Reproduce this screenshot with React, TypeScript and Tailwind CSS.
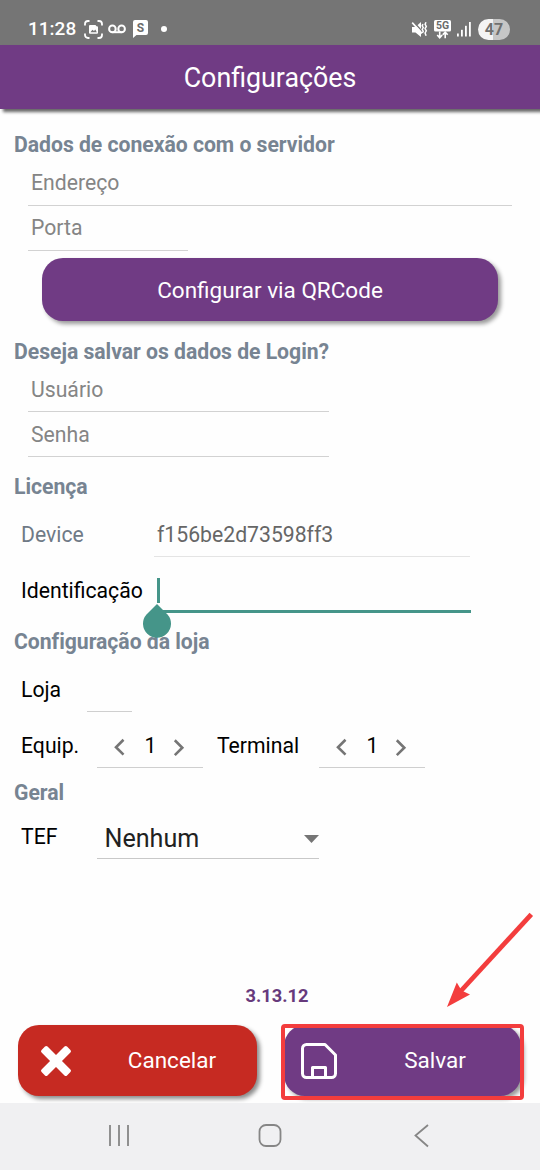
import type { ReactNode } from "react";

function SectionTitle({ children, className = "" }: { children: ReactNode; className?: string }) {
    return (
        <h2 className={`pl-3.5 h-8 leading-8 text-[21.2px] font-bold text-[#778492] whitespace-nowrap tracking-[-0.03px] ${className}`}>
            {children}
        </h2>
    );
}

function Field({ label, className }: { label: string; className: string }) {
    return (
        <div className={`ml-7 h-[45px] pl-[3px] border-b border-[#d2d2d2] text-[21.2px] text-[#858585] ${className}`}>
            {label}
        </div>
    );
}

function Stepper({ value }: { value: number }) {
    return (
        <div className="w-[106px] h-11 border-b border-[#cfcfcf] flex items-center">
            <svg className="ml-[15px] mt-0.5 w-3.5 h-5" viewBox="0 0 14 20" fill="none" stroke="#757575" strokeWidth="2.6">
                <path d="M11.5 2.8 4 10.2l7.5 7.4" />
            </svg>
            <span className="w-[46px] pl-[3px] text-center">{value}</span>
            <svg className="mt-0.5 w-3.5 h-5" viewBox="0 0 14 20" fill="none" stroke="#757575" strokeWidth="2.6">
                <path d="m2.8 3.3 7.5 7.4-7.5 7.4" />
            </svg>
        </div>
    );
}

function StatusBar() {
    return (
        <div className="h-[45px] shrink-0 bg-[#757575] text-white flex items-center pt-[13px] pl-7 pr-[30px]">
            <span className="w-12 text-[19px] font-medium leading-8 whitespace-nowrap">11:28</span>
            {/* Capture */}
            <svg className="ml-2 w-[19px] h-[19px]" viewBox="0 0 19 19" fill="none" stroke="white" strokeWidth="1.8">
                <path d="M1 5.5V4a3 3 0 0 1 3-3h1.5M13.5 1H15a3 3 0 0 1 3 3v1.5M18 13.5V15a3 3 0 0 1-3 3h-1.5M5.5 18H4a3 3 0 0 1-3-3v-1.5" />
                <path d="M6 5h5.5l1 1.2H13a1 1 0 0 1 1 1v5.6a1 1 0 0 1-1 1H6a1 1 0 0 1-1-1V6a1 1 0 0 1 1-1Z" fill="white" stroke="none" />
                <path d="m6.4 12.2 2-2.4 1.6 1.2 1.3-1.6 1.5 2.8Z" fill="#757575" stroke="none" />
            </svg>
            {/* Voicemail */}
            <svg className="ml-[5px] w-[18px] h-2.5" viewBox="0 0 18 10" fill="none" stroke="white" strokeWidth="2">
                <circle cx="4.4" cy="4.9" r="3.3" />
                <circle cx="13.6" cy="4.9" r="3.3" />
                <path d="M4.4 8.2h9.2" />
            </svg>
            {/* Message */}
            <span className="ml-[7px] w-[15px] h-[18px] relative">
                <svg className="w-[15px] h-[18px]" viewBox="0 0 15 18">
                    <path d="M2 0h11a2 2 0 0 1 2 2v11a2 2 0 0 1-2 2H3.5L0 18V2a2 2 0 0 1 2-2Z" fill="white" />
                </svg>
                <span className="absolute inset-x-0 top-0 h-[15px] leading-[16px] text-center text-[12px] font-bold text-[#6b6b6b]">S</span>
            </span>
            <span className="ml-[13px] w-1.5 h-1.5 rounded-full bg-white" />
            <div className="flex-1" />
            {/* Muted with vibration */}
            <svg className="w-[17px] h-[17px]" viewBox="0 0 17 17" fill="none" stroke="white">
                <path d="M1 6h3.5L10 1v15l-5.5-4.5H1Z" fill="white" stroke="none" />
                <path d="M2.2.6 11.8 11" stroke="#757575" strokeWidth="1.5" />
                <path d="M1.2 1.6 11 12.4" strokeWidth="1.6" />
                <path d="m12 3.2-.8 1.6 1 1.8-1 1.8 1 1.8-.8 1.8M15 1.2l-.9 2 1.2 2.2-1.2 2.2 1.2 2.2-1.2 2.2 1 2.8" strokeWidth="1.5" />
            </svg>
            {/* 5G */}
            <span className="ml-[6px] w-[17px] h-[19px] relative">
                <svg className="w-[17px] h-[19px]" viewBox="0 0 17 19">
                    <rect width="17" height="11.5" rx="1.5" fill="white" />
                    <path d="M5.7 11.5v6M3.2 15l2.5 2.7L8.2 15M11.2 18.3v-6M8.7 14.8l2.5-2.7 2.5 2.7" fill="none" stroke="white" strokeWidth="1.6" />
                </svg>
                <span className="absolute inset-x-0 top-0 h-[11px] leading-[12px] text-center text-[10.5px] font-bold text-[#6b6b6b]">5G</span>
            </span>
            {/* Signal */}
            <svg className="ml-[6px] w-3.5 h-4" viewBox="0 0 14 16" fill="white">
                <rect x="0" y="12.5" width="1.8" height="3" />
                <rect x="4" y="8.8" width="1.8" height="6.7" />
                <rect x="8" y="4.8" width="1.8" height="10.7" />
                <rect x="12" y="1" width="1.8" height="14.5" />
            </svg>
            {/* Battery */}
            <span className="ml-[7px] w-8 h-[21px] rounded-full bg-[linear-gradient(to_right,#f4f4f4_47%,#c6c6c6_47%)] text-center leading-[22px] text-[16px] font-bold text-[#707070]">
                47
            </span>
        </div>
    );
}

export default function App() {
    return (
        <div className="relative w-[540px] h-[1170px] overflow-hidden flex flex-col bg-[#fefefe] text-black font-[Roboto,sans-serif]">
            <StatusBar />

            <header className="h-16 shrink-0 bg-[#703b84] text-white text-center text-[26.8px] leading-[66px] shadow-[3px_3px_3px_rgba(0,0,0,0.6)]">
                Configurações
            </header>

            <main className="flex-1 pt-5">
                {/* Server */}
                <SectionTitle>Dados de conexão com o servidor</SectionTitle>
                <Field label="Endereço" className="w-[484px] leading-[43px]" />
                <Field label="Porta" className="w-40 leading-[43px]" />
                <button className="block mt-[7px] ml-[42px] w-[456px] h-[63px] pt-0.5 rounded-[21px] bg-[#703b84] text-white text-[22.5px] shadow-[3px_3px_4px_rgba(0,0,0,0.4)]">
                    Configurar via QRCode
                </button>

                {/* Login */}
                <SectionTitle className="mt-[15px] -mb-px">Deseja salvar os dados de Login?</SectionTitle>
                <Field label="Usuário" className="w-[301px] leading-[45px]" />
                <Field label="Senha" className="w-[301px] leading-[45px]" />

                {/* License */}
                <SectionTitle className="mt-[14px]">Licença</SectionTitle>
                <div className="mt-2.5 pl-[21px] h-11 flex text-[21.2px] leading-[44px]">
                    <span className="w-[133px] text-[#6f7a86]">Device</span>
                    <span className="w-[316px] pl-[3px] border-b border-[#e4e4e4] text-[#666]">f156be2d73598ff3</span>
                </div>
                <div className="mt-3 pl-[21px] h-11 flex text-[21.2px] leading-[44px]">
                    <span className="w-[133px]">Identificação</span>
                    <div className="relative w-[317px] border-b-[3px] border-[#459589]">
                        <span className="absolute left-[3px] top-[9px] w-[3px] h-[25px] bg-[#459589]" />
                        <svg className="absolute -left-[11px] top-[35px] w-7 h-[34px]" viewBox="0 0 28 34" fill="#459589">
                            <path d="M14 0 24.5 10.5a14 14 0 1 1-21 0Z" />
                        </svg>
                    </div>
                </div>

                {/* Store */}
                <SectionTitle className="mt-[13px]">Configuração da loja</SectionTitle>
                <div className="mt-2.5 pl-[21px] h-11 flex text-[21.2px] leading-[44px]">
                    <span className="w-[66px]">Loja</span>
                    <span className="w-[45px] border-b border-[#cfcfcf]" />
                </div>
                <div className="mt-3 pl-[21px] h-11 flex text-[21.2px] leading-[44px]">
                    <span className="w-[76px]">Equip.</span>
                    <Stepper value={1} />
                    <span className="w-[116px] pl-3.5">Terminal</span>
                    <Stepper value={1} />
                </div>

                {/* General */}
                <SectionTitle className="mt-[9px]">Geral</SectionTitle>
                <div className="mt-[5px] pl-[21px] h-[45px] flex text-[21.2px] leading-[46px]">
                    <span className="w-[76px]">TEF</span>
                    <div className="w-[222px] pl-[7.5px] border-b border-[#c8c8c8] flex items-start justify-between text-[25.1px] leading-[49px] text-[#212121]">
                        Nenhum
                        <svg className="mt-[21px] w-[15px] h-2" viewBox="0 0 15 8" fill="#757575">
                            <path d="M0 0h15L7.5 8Z" />
                        </svg>
                    </div>
                </div>

                <p className="mt-[125px] pl-[14px] text-center text-[18.3px] leading-6 font-bold text-[#673a7c]">3.13.12</p>

                {/* Actions */}
                <div className="mt-[17px] pl-[18px] flex gap-[27px]">
                    <button className="w-[239px] h-[71px] flex items-center rounded-[21px] bg-[#c62a22] text-white text-[22.5px] shadow-[3px_3px_4px_rgba(0,0,0,0.45)]">
                        <svg className="ml-[22px] w-8 h-8" viewBox="0 0 32 32" fill="white">
                            <g transform="rotate(45 16 16)">
                                <rect x="-2" y="11.8" width="36" height="8.4" rx="1.8" />
                                <rect x="11.8" y="-2" width="8.4" height="36" rx="1.8" />
                            </g>
                        </svg>
                        <span className="flex-1 pt-px pl-[15px]">Cancelar</span>
                    </button>
                    <button className="w-[237px] h-[71px] flex items-center rounded-[21px] bg-[#703b84] text-white text-[22.5px] shadow-[3px_3px_4px_rgba(0,0,0,0.4)]">
                        <svg className="ml-[17px] w-9 h-9" viewBox="0 0 36 36" fill="none" stroke="white" strokeWidth="3" strokeLinejoin="round">
                            <path d="M5.5 1.5H24L34.5 12v18.5a4 4 0 0 1-4 4h-25a4 4 0 0 1-4-4v-25a4 4 0 0 1 4-4Z" />
                            <path d="M11.5 34V24.5h13V34" />
                        </svg>
                        <span className="flex-1 pt-px pl-[12px]">Salvar</span>
                    </button>
                </div>
            </main>

            {/* Navigation bar */}
            <nav className="h-[67px] shrink-0 bg-[#f0f0f2]">
                <svg className="w-[540px] h-[67px]" viewBox="0 0 540 67" fill="none" stroke="#868686" strokeWidth="1.8">
                    <path d="M110 22v21M119 22v21M128 22v21" />
                    <rect x="259.5" y="22" width="21" height="21" rx="6.5" />
                    <path d="M428 22 415.5 32.5 428 43.5" />
                </svg>
            </nav>

            {/* Highlight around the save button */}
            <div className="absolute left-[281px] top-[1024px] w-[243px] h-[76px] rounded-[4px] border-4 border-[#f33d3d]" />
            <svg className="absolute left-[440px] top-[905px] w-[100px] h-[110px]" viewBox="0 0 100 110" fill="#f33d3d">
                <path d="M91.3 9.3 19.5 87.5" stroke="#f33d3d" strokeWidth="4.8" />
                <path d="M7 102 16.8 77.5 21.5 85.5 30 89.5Z" />
            </svg>
        </div>
    );
}
